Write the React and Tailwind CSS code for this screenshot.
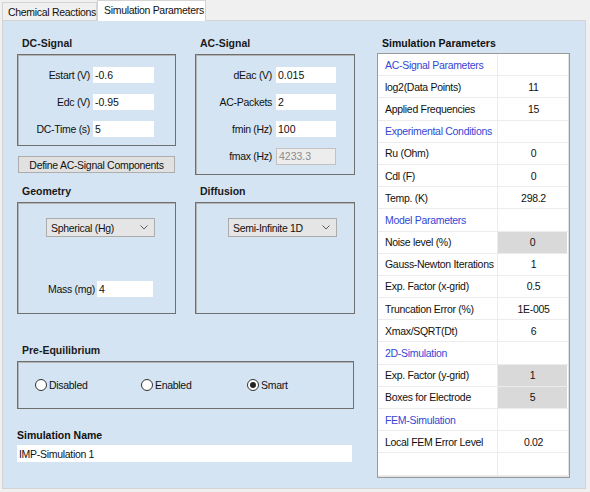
import React from 'react';

const font = { fontFamily: '"Liberation Sans", Arial, sans-serif' };

function Group({ title, className, children }) {
  return (
    <div className="flex flex-col">
      <div className="h-[17px] pl-[5px] text-[10.5px] font-bold leading-[12px] text-[#1a1a1a]">{title}</div>
      <div className={`border border-[#6f6f6f] shadow-[inset_1px_1px_0_#b4b4b4] ${className}`}>{children}</div>
    </div>
  );
}

function Field({ label, value, labelW, inputW, gap, disabled }) {
  return (
    <div className="flex items-center h-[16px]">
      <div className="text-right tracking-[-0.3px]" style={{ width: labelW }}>{label}</div>
      <div
        className={
          disabled
            ? 'h-[17px] pl-[2px] flex items-center bg-[#ededed] border border-[#c2c2c2] text-[#8a8a8a]'
            : 'h-[16px] pl-[2px] flex items-center bg-white'
        }
        style={{ width: inputW, marginLeft: gap }}
      >
        {value}
      </div>
    </div>
  );
}

function Combo({ value }) {
  return (
    <div className="w-[109px] h-[19px] flex items-center justify-between pl-[4px] pr-[6px] bg-[#e5e5e5] border border-[#acacac]">
      <span className="tracking-[-0.3px]">{value}</span>
      <svg width="8" height="5" viewBox="0 0 8 5">
        <polyline points="0.5,0.5 4,4 7.5,0.5" fill="none" stroke="#5a5a5a" strokeWidth="1" />
      </svg>
    </div>
  );
}

function Radio({ label, checked }) {
  return (
    <div className="w-[114px] flex items-center gap-[2px]">
      <div className="w-[12px] h-[12px] rounded-full border border-[#333] bg-white flex items-center justify-center">
        {checked && <div className="w-[6px] h-[6px] rounded-full bg-[#222]" />}
      </div>
      <span className="tracking-[-0.3px]">{label}</span>
    </div>
  );
}

const params = [
  { cat: 'AC-Signal Parameters' },
  { name: 'log2(Data Points)', value: '11' },
  { name: 'Applied Frequencies', value: '15' },
  { cat: 'Experimental Conditions' },
  { name: 'Ru (Ohm)', value: '0' },
  { name: 'Cdl (F)', value: '0' },
  { name: 'Temp. (K)', value: '298.2' },
  { cat: 'Model Parameters' },
  { name: 'Noise level (%)', value: '0', gray: true },
  { name: 'Gauss-Newton Iterations', value: '1' },
  { name: 'Exp. Factor (x-grid)', value: '0.5' },
  { name: 'Truncation Error (%)', value: '1E-005' },
  { name: 'Xmax/SQRT(Dt)', value: '6' },
  { cat: '2D-Simulation' },
  { name: 'Exp. Factor (y-grid)', value: '1', gray: true },
  { name: 'Boxes for Electrode', value: '5', gray: true },
  { cat: 'FEM-Simulation' },
  { name: 'Local FEM Error Level', value: '0.02' },
  { name: '', value: '' },
];

export default function App() {
  return (
    <div className="w-[590px] h-[492px] bg-[#f0f0f0] text-[10.5px] leading-[12px] text-[#111]" style={font}>
      {/* tab strip */}
      <div className="h-[20px] flex items-end pl-[2px]">
        <div className="h-[18px] w-[95px] flex items-center pl-[5px] border border-b-0 border-[#d4d4d4] bg-[#f0f0f0] tracking-[-0.3px]">
          Chemical Reactions
        </div>
        <div className="relative z-10 h-[21px] -mb-[1px] w-[109px] flex items-center pl-[6px] pb-[2px] border border-b-0 border-[#d4d4d4] bg-white tracking-[-0.3px]">
          Simulation Parameters
        </div>
      </div>

      {/* panel */}
      <div className="ml-[2px] w-[584px] h-[469px] border border-[#d4d4d4] bg-[#d5e4f2] flex pl-[14px] pt-[16px]">
        {/* left column */}
        <div className="w-[360px] flex flex-col">
          <div className="flex gap-[19px]">
            <div className="flex flex-col">
              <Group title="DC-Signal" className="w-[159px] h-[92px] flex flex-col gap-[11px] pt-[12px]">
                <Field label="Estart (V)" value="-0.6" labelW={72} inputW={61} gap={3} />
                <Field label="Edc (V)" value="-0.95" labelW={72} inputW={61} gap={3} />
                <Field label="DC-Time (s)" value="5" labelW={72} inputW={61} gap={3} />
              </Group>
              <div className="mt-[10px] ml-[1px] w-[157px] h-[17px] flex items-center justify-center bg-[#e1e1e1] border border-[#adadad] tracking-[-0.3px]">
                Define AC-Signal Components
              </div>
            </div>
            <Group title="AC-Signal" className="w-[160px] h-[121px] flex flex-col gap-[11px] pt-[12px]">
              <Field label="dEac (V)" value="0.015" labelW={76} inputW={60} gap={4} />
              <Field label="AC-Packets" value="2" labelW={76} inputW={60} gap={4} />
              <Field label="fmin (Hz)" value="100" labelW={76} inputW={60} gap={4} />
              <Field label="fmax (Hz)" value="4233.3" labelW={76} inputW={60} gap={4} disabled />
            </Group>
          </div>

          <div className="flex gap-[19px] mt-[10px]">
            <Group title="Geometry" className="w-[159px] h-[112px] flex flex-col pt-[15px] pl-[28px]">
              <Combo value="Spherical (Hg)" />
              <div className="mt-[44px] flex items-center justify-end pr-[22px] gap-[2px]">
                <span className="tracking-[-0.3px]">Mass (mg)</span>
                <div className="w-[56px] h-[16px] pl-[2px] flex items-center bg-white">4</div>
              </div>
            </Group>
            <Group title="Diffusion" className="w-[160px] h-[112px] flex flex-col pt-[15px] pl-[32px]">
              <Combo value="Semi-Infinite 1D" />
            </Group>
          </div>

          <div className="mt-[30px]">
            <Group title="Pre-Equilibrium" className="w-[337px] h-[48px] flex items-center pl-[17px]">
              <Radio label="Disabled" />
              <Radio label="Enabled" />
              <Radio label="Smart" checked />
            </Group>
          </div>

          <div className="mt-[20px] h-[16px] font-bold">Simulation Name</div>
          <div className="w-[335px] h-[17px] bg-white flex items-center pl-[2px] tracking-[-0.3px]">IMP-Simulation 1</div>
        </div>

        {/* right column */}
        <div className="w-[193px] flex flex-col">
          <div className="h-[16px] pl-[5px] font-bold">Simulation Parameters</div>
          <div className="h-[425px] bg-white border border-[#9a9a9a] shadow-[inset_-1px_-1px_0_#e2e2e2] flex flex-col">
            {params.map((p, i) => (
              <div key={i} className="h-[22.2px] grid grid-cols-[120px_1fr] border-b border-[#ececec] tracking-[-0.3px]">
                <div className={`flex items-center pl-[7px] border-r border-[#ececec] ${p.cat ? 'text-[#3347d6]' : ''}`}>
                  {p.cat || p.name}
                </div>
                <div className={`flex items-center justify-center ${p.gray ? 'bg-[#d9d9d9] mr-[2px]' : ''}`}>{p.value}</div>
              </div>
            ))}
          </div>
        </div>
      </div>
    </div>
  );
}
